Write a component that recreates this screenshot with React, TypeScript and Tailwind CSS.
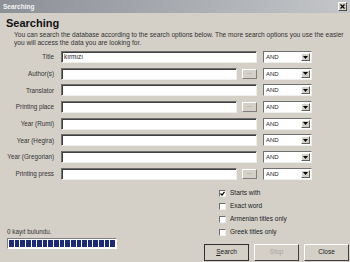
import React from "react";

const labels = [
  { l: "Title", v: "kırmızı", btn: false },
  { l: "Author(s)", v: "", btn: true },
  { l: "Translator", v: "", btn: false },
  { l: "Printing place", v: "", btn: true },
  { l: "Year (Rumi)", v: "", btn: false },
  { l: "Year (Hegira)", v: "", btn: false },
  { l: "Year (Gregorian)", v: "", btn: false },
  { l: "Printing press", v: "", btn: true },
];

function Select() {
  return (
    <div className="w-[49px] h-[12px] bg-white border border-t-[#707070] border-l-[#707070] border-b-[#eeeeee] border-r-[#eeeeee] flex items-stretch">
      <div className="flex-1 text-[6px] leading-[10px] pl-[2px] text-[#222]">AND</div>
      <div className="w-[9px] m-[1px] bg-[#d4d0c8] border border-t-white border-l-white border-b-[#606060] border-r-[#606060] flex items-center justify-center">
        <svg width="5" height="3" viewBox="0 0 5 3"><path d="M0 0h5L2.5 3z" fill="#000" /></svg>
      </div>
    </div>
  );
}

function Check({ label, checked }: { label: string; checked?: boolean }) {
  return (
    <div className="flex items-center gap-[4px] h-[13px]">
      <div className="w-[7px] h-[7px] bg-white border border-t-[#707070] border-l-[#707070] border-b-[#eee] border-r-[#eee] flex items-center justify-center">
        {checked && (
          <svg width="5" height="5" viewBox="0 0 5 5"><path d="M0.5 2.5L2 4L4.5 0.8" stroke="#000" strokeWidth="1.2" fill="none" /></svg>
        )}
      </div>
      <span className="text-[6.5px] text-[#222]">{label}</span>
    </div>
  );
}

function Btn({ children, disabled, bold }: { children: React.ReactNode; disabled?: boolean; bold?: boolean }) {
  return (
    <div
      className={
        "w-[45px] h-[17px] shrink-0 bg-[#d4d0c8] flex items-center justify-center text-[6.5px] border " +
        (bold ? "border-[#303030] " : "border-t-white border-l-white border-b-[#404040] border-r-[#404040] ") +
        (disabled ? "text-[#a8a59e]" : "text-[#222]")
      }
    >
      {children}
    </div>
  );
}

export default function App() {
  return (
    <div className="w-[350px] h-[262px] bg-[#d4d0c8] flex flex-col overflow-hidden font-['Liberation_Sans',Arial,sans-serif] text-[#222]">
      <div className="h-[13px] shrink-0 bg-gradient-to-r from-[#8c9097] to-[#c4c6c9] flex items-center justify-between pl-[3px] pr-[3px]">
        <span className="text-[6.5px] text-white font-bold opacity-90">Searching</span>
        <div className="w-[9px] h-[9px] bg-[#d4d0c8] border border-t-white border-l-white border-b-[#505050] border-r-[#505050] flex items-center justify-center">
          <svg width="5" height="5" viewBox="0 0 5 5"><path d="M0.5 0.5L4.5 4.5M4.5 0.5L0.5 4.5" stroke="#000" strokeWidth="1.1" /></svg>
        </div>
      </div>
      <div className="pl-[6px] pt-[4px] text-[11px] font-bold leading-[12px] text-[#111]">Searching</div>
      <div className="pl-[14px] pt-[2px] text-[6.6px] leading-[8px] text-[#333]">
        You can search the database according to the search options below. The more search options you use the easier
        <br />
        you will access the data you are looking for.
      </div>
      <div className="flex flex-col gap-[4.7px] pt-[4px]">
        {labels.map((r) => (
          <div key={r.l} className="flex items-center h-[12px]">
            <div className="w-[55px] text-right text-[6.3px] text-[#333] pr-[1px]">{r.l}</div>
            <div className="w-[6px]" />
            <div className={"h-[12px] bg-white border border-t-[#707070] border-l-[#707070] border-b-[#eeeeee] border-r-[#eeeeee] shadow-[inset_1px_1px_0_#404040] text-[6.3px] leading-[10px] pl-[2px] " + (r.btn ? "w-[176px]" : "w-[196px]")}>
              {r.v}
            </div>
            {r.btn && (
              <div className="ml-[5px] w-[15px] h-[10px] bg-[#d4d0c8] border border-t-white border-l-white border-b-[#808080] border-r-[#808080] text-[6px] leading-[4px] text-[#777] text-center">...</div>
            )}
            <div className="w-[6px]" />
            <Select />
          </div>
        ))}
      </div>
      <div className="flex flex-1">
        <div className="w-[204px] shrink-0 flex flex-col justify-end pl-[7px] pb-[13px]">
          <div className="text-[6.3px] text-[#333] mb-[2px]">0 kayıt bulundu.</div>
          <div className="w-[110px] h-[11px] border border-t-[#808080] border-l-[#808080] border-b-white border-r-white bg-white flex gap-[1px] p-[1px]">
            {Array.from({ length: 19 }).map((_, i) => (
              <div key={i} className="w-[4.8px] h-full bg-[#1d2a7a]" />
            ))}
          </div>
        </div>
        <div className="flex flex-col pt-[7px]">
          <div className="pl-[15px] flex flex-col">
            <Check label="Starts with" checked />
            <Check label="Exact word" />
            <Check label="Armenian titles only" />
            <Check label="Greek titles only" />
          </div>
          <div className="flex gap-[5px] mt-[5px]">
            <Btn bold><span className="underline">S</span>earch</Btn>
            <Btn disabled>Stop</Btn>
            <Btn>Close</Btn>
          </div>
        </div>
      </div>
    </div>
  );
}
